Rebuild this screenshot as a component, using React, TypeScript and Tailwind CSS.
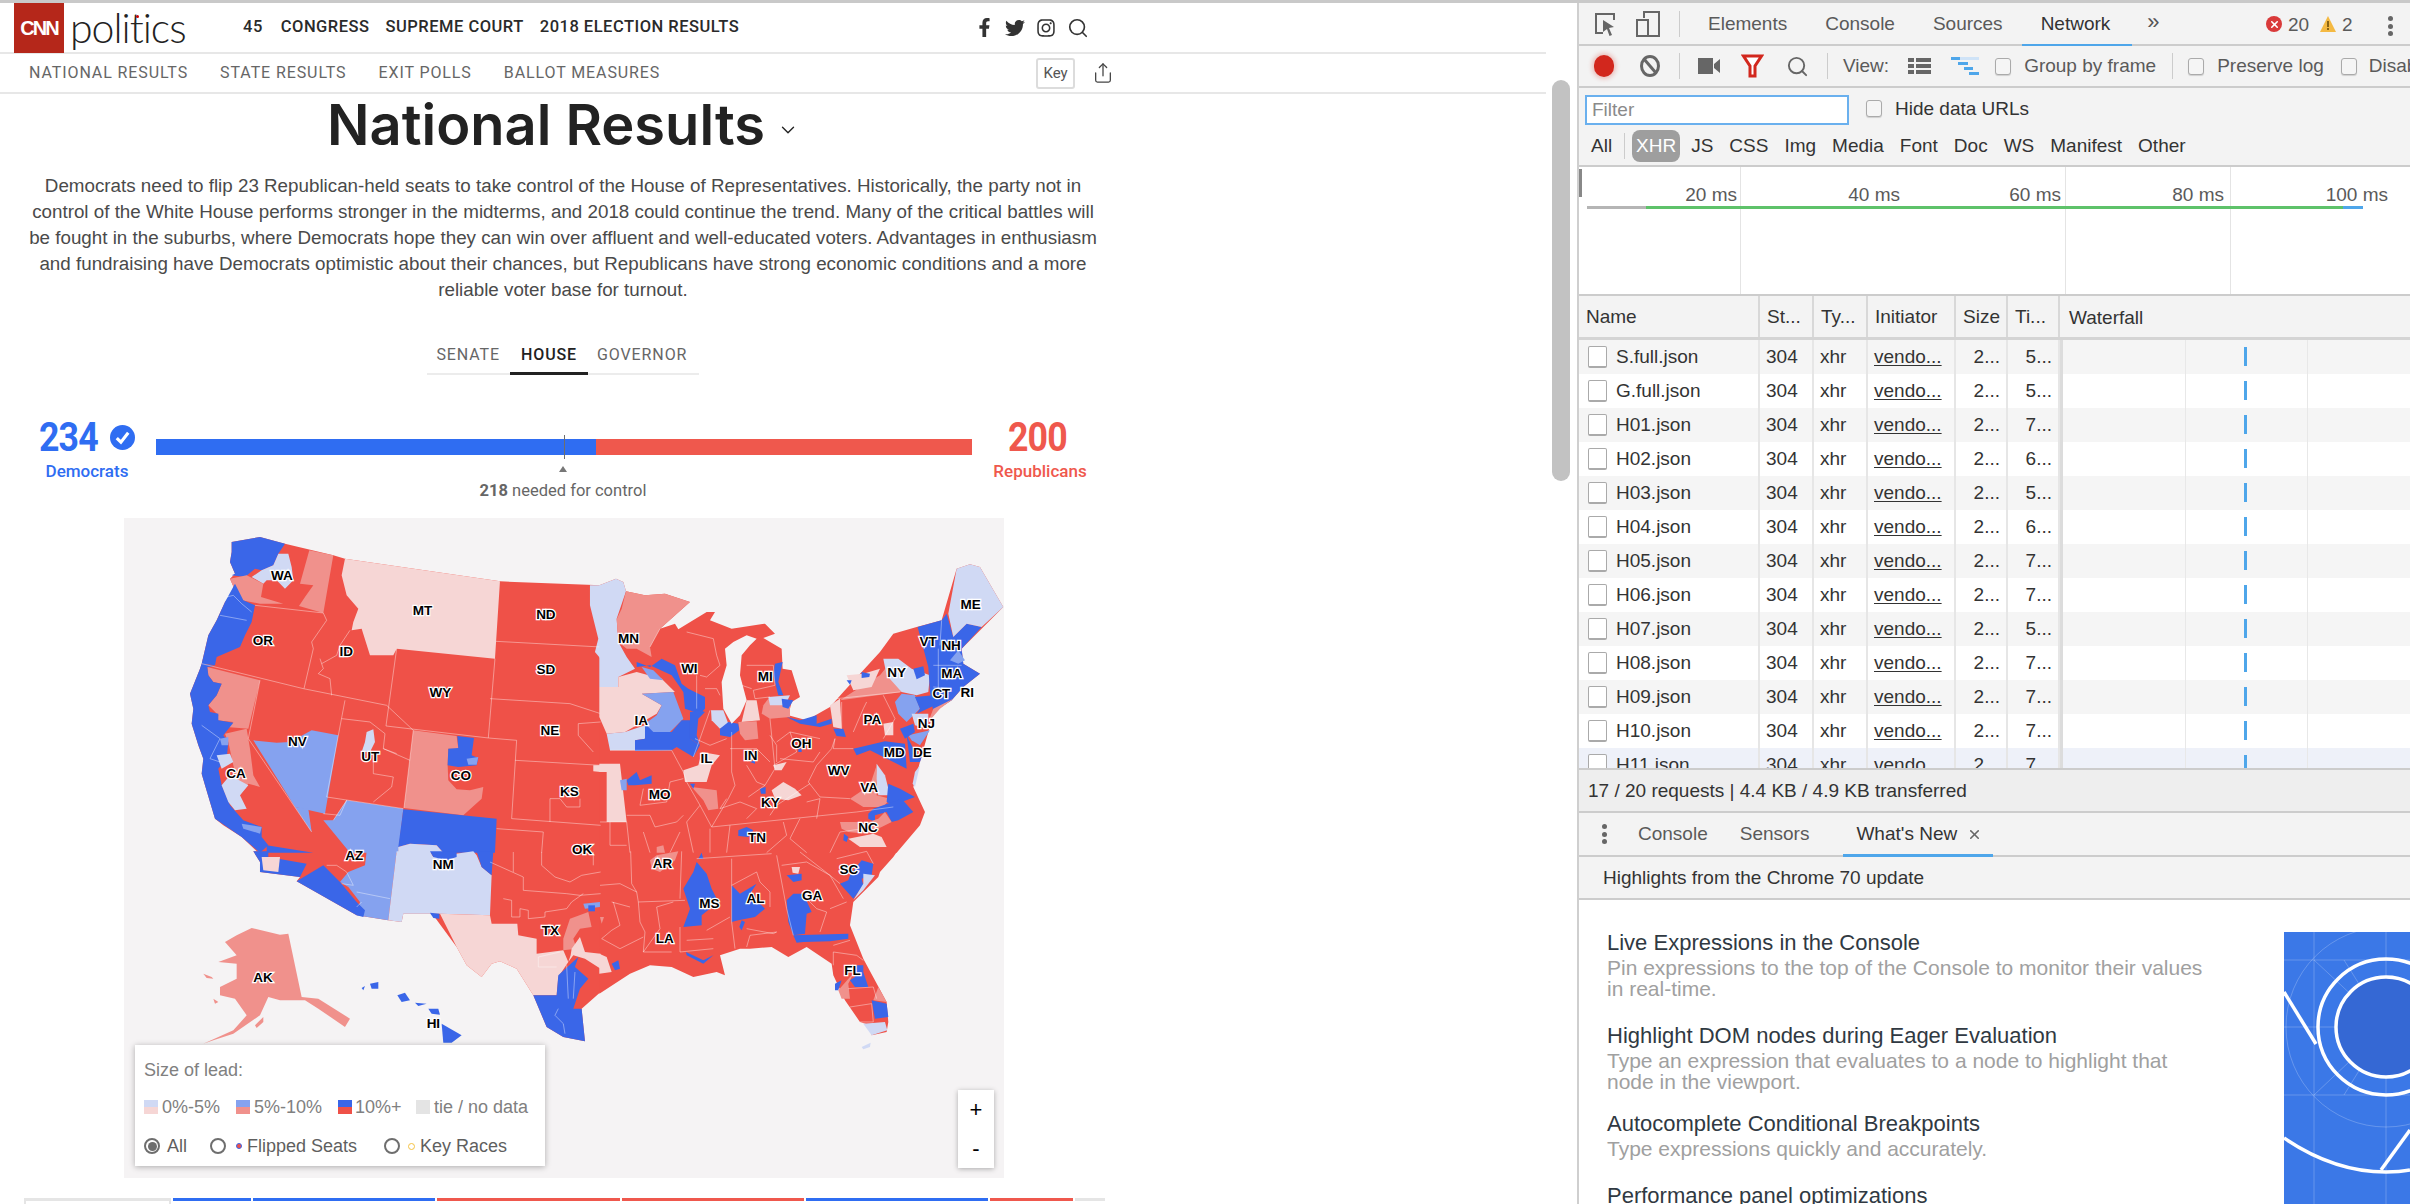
import React from "react";
import { FaFacebookF, FaTwitter, FaInstagram } from "react-icons/fa";
import { Search, ChevronDown, Share, X } from "lucide-react";

const RED = "#ef5148";
const BLUE = "#3a66e8";
const PINK = "#f0918c";
const PALE = "#f6d6d5";
const MID = "#85a2ef";
const LIGHT = "#d0d9f4";
const BG = "#f5f3f4";

type Quad = { ox: number; oy: number; land: string; patches: [string, string][]; lakes?: string[]; lines: string[] };

// the map is split in four parts, each drawn at 3x and scaled down
const quads: Quad[] = [
  {
    ox: 56,
    oy: 14,
    land: "155,30 240,15 315,35 460,70 495,80 960,148 1262,160 1262,962 235,962 185,915 130,880 105,860 75,760 65,725 70,680 55,640 35,575 40,530 30,485 60,410 65,395 85,310 110,265 135,210 165,175 150,140 165,125 150,90 155,60",
    patches: [
      [PALE, "495,80 960,148 945,380 650,350 640,370 570,370 545,290 515,295 520,270 535,230 500,190 485,130"],
      [MID, "220,625 290,632 330,630 395,595 475,610 435,845 345,825"],
      [MID, "345,825 385,830 395,900"],
      [MID, "500,805 670,830 655,962 510,962 430,865 460,865"],
      [PINK, "700,595 830,612 835,650 805,650 803,700 805,745 830,772 870,775 910,765 905,800 850,850 672,828"],
      [BLUE, "832,612 882,618 875,670 895,678 890,700 835,705 803,700 805,650 835,648"],
      [BLUE, "670,832 950,860 945,962 790,962 770,940 690,935 655,945"],
      [BLUE, "155,30 240,15 315,35 295,65 280,100 245,115 225,110 195,135 155,130 165,125 150,90 155,60"],
      [LIGHT, "295,65 325,65 335,105 340,145 315,170 290,145 260,145 250,155 215,135 245,115 280,100"],
      [PINK, "388,55 460,70 430,243 357,222 375,195 400,160 360,155"],
      [PINK, "150,140 200,130 250,155 243,195 310,215 240,215 185,205 165,175"],
      [BLUE, "165,155 190,205 225,220 215,270 195,310 180,345 110,375 105,400 65,395 85,310 110,265 135,210"],
      [PINK, "82,405 240,445 205,590 140,585 160,570 110,565 115,550 85,520 110,490 125,455 100,450 85,430"],
      [BLUE, "65,395 105,402 82,405 85,430 100,450 125,455 110,490 85,520 90,540 115,545 115,565 160,572 130,610 145,630 140,680 115,710 125,760 150,820 190,865 245,885 245,915 265,940 240,962 185,915 105,860 75,760 65,725 70,680 55,640 35,575 40,530 30,485 60,410"],
      [PINK, "135,605 200,590 210,650 220,730 240,765 205,755 180,790 160,700 145,630"],
      [LIGHT, "110,670 150,665 160,690 125,710"],
      [LIGHT, "125,760 150,730 205,760 180,790 200,830 165,835 145,810"],
      [MID, "185,875 245,885 240,905 190,890"],
      [MID, "120,620 145,615 145,640 125,640"],
      [BLUE, "260,940 400,962 260,962"],
      [LIGHT, "560,600 580,592 585,630 570,660 545,660 555,630"],
      [LIGHT, "1230,160 1262,160 1262,380 1245,360 1255,320 1230,220"],
      [PALE, "1240,700 1262,700 1262,720 1240,718"],
      [LIGHT, "655,945 690,935 770,940 790,962 655,962"],
      [MID, "860,680 895,675 890,698 865,698"],
    ],
    lines: [
      "430,243 440,265 395,330 400,350 372,470",
      "225,220 430,243",
      "65,395 370,470 620,520 700,595",
      "240,445 205,620 395,900",
      "495,505 440,795 670,830",
      "650,350 618,582 925,618",
      "672,828 700,595",
      "945,380 925,618 1010,625 995,860 1262,880",
      "948,328 1262,345",
      "930,500 1170,515 1262,545",
      "1005,685 1262,700",
      "485,560 570,570 615,605 610,650 690,685",
      "580,690 580,725 640,735 635,765 580,810",
      "610,650 650,665",
      "420,380 430,410 415,425 450,440 455,490",
      "510,295 480,340 470,370 425,395",
      "1110,800 1140,800 1160,825 1200,825 1200,800",
      "1110,800 1110,870",
      "950,890 1090,900 1085,962",
      "120,250 200,265",
      "140,195 160,190 185,215 215,240",
      "65,580 120,620 90,680 120,690",
      "1195,575 1262,570",
      "1195,575 1195,610 1240,660",
      "460,865 500,805 480,850 430,845",
    ],
  },
  {
    ox: 476,
    oy: 14,
    land: "-2,160 48,140 70,150 78,178 135,190 195,185 270,210 180,290 225,275 235,292 320,240 345,240 330,265 395,290 495,275 525,305 490,318 545,350 548,410 575,415 600,495 575,510 565,550 620,565 690,525 730,480 840,360 880,305 950,285 1025,265 1070,110 1110,97 1140,105 1210,225 1145,290 1085,350 1090,395 1140,425 1090,465 1055,505 1000,540 985,600 960,690 940,765 975,840 960,880 890,962 -2,962",
    patches: [
      [LIGHT, "-2,160 48,140 70,150 78,178 50,260 55,330 80,375 105,410 55,435 55,465 -2,465"],
      [PINK, "78,178 135,190 195,185 270,210 180,290 150,345 155,375 110,350 80,350 55,330 50,262 65,230"],
      [PALE, "-2,465 55,465 55,435 110,420 185,440 225,480 125,485 185,520 170,545 75,600 20,605 -2,555"],
      [MID, "125,485 220,480 250,560 210,600 155,600 135,575 170,550 185,520"],
      [MID, "125,405 160,415 190,445 150,440"],
      [LIGHT, "20,605 75,600 135,580 135,620 105,625 105,655 30,655"],
      [BLUE, "105,625 135,620 135,575 160,600 215,600 245,565 270,565 270,620 300,640 280,675 230,645 215,655 105,657"],
      [BLUE, "110,390 150,405 185,380 225,400 245,455 265,470 315,495 315,530 300,545 255,530 250,480 215,430 150,400 110,405"],
      [BLUE, "270,540 300,535 315,540 295,560 290,610 300,640 270,620"],
      [LIGHT, "333,535 370,535 385,575 360,590 335,565"],
      [BLUE, "360,590 385,570 415,575 418,595 390,615 360,610"],
      [BLUE, "525,395 548,390 535,450 550,490 535,490 520,430"],
      [PALE, "425,570 440,505 470,505 480,565"],
      [PINK, "415,570 470,568 475,620 435,625 420,605"],
      [PINK, "485,545 490,520 505,500 570,520 570,555 510,560"],
      [LIGHT, "505,495 570,490 555,520 510,520"],
      [BLUE, "545,500 580,505 565,530 548,525"],
      [BLUE, "560,555 600,565 650,550 650,575 695,560 695,575 660,585 600,575"],
      [BLUE, "700,590 730,590 738,615 710,612"],
      [PALE, "690,520 720,500 725,590 700,585"],
      [PINK, "720,505 790,460 840,430 860,405 905,480"],
      [PALE, "740,430 790,425 840,410 815,465 760,475"],
      [BLUE, "785,420 810,425 808,435 785,438"],
      [BLUE, "740,445 755,445 750,458"],
      [LIGHT, "850,380 895,380 935,410 990,430 985,480 950,490 905,480 860,430"],
      [BLUE, "940,410 970,403 975,430 950,442"],
      [BLUE, "953,285 1025,265 1040,245 1060,315 1100,275 1145,285 1085,350 1090,395 1140,425 1090,465 1055,505 1000,540 990,480 985,405"],
      [LIGHT, "1045,245 1070,110 1110,97 1140,105 1210,225 1145,285 1100,275 1060,315"],
      [MID, "1050,385 1075,355 1095,385 1075,395"],
      [MID, "885,510 905,485 945,490 960,530 920,570 895,545"],
      [BLUE, "945,495 1000,490 1005,520 950,545 960,530"],
      [PINK, "1000,530 1060,500 1020,530 985,570"],
      [LIGHT, "935,545 985,545 985,590 945,580"],
      [MID, "925,610 990,595 960,640 935,625"],
      [BLUE, "900,590 940,575 945,600 915,620"],
      [PALE, "850,575 880,570 880,610 855,610"],
      [BLUE, "760,650 855,628 915,635 920,710 880,690 840,670 810,655 770,670"],
      [BLUE, "920,610 940,650 938,680 965,675 960,690 930,690"],
      [LIGHT, "945,720 960,700 945,765 938,755"],
      [LIGHT, "830,695 855,730 870,790 835,790 828,740"],
      [PINK, "750,800 810,760 830,700 830,790 870,800 850,825 790,825"],
      [BLUE, "865,755 900,770 945,795 905,810 900,830 860,810"],
      [BLUE, "820,830 905,800 940,840 895,865 875,870 860,840 825,850 825,870 805,860 805,845"],
      [PINK, "720,870 775,870 805,870 835,860 855,840 875,870 845,885 800,905 745,900 725,890"],
      [PALE, "745,920 820,905 845,915 860,945 780,945"],
      [BLUE, "732,905 745,915 740,930 730,925"],
      [PALE, "520,700 560,690 545,715 525,715"],
      [PALE, "515,775 550,750 585,770 605,790 565,805 525,800"],
      [BLUE, "480,770 497,765 497,785 483,785"],
      [PALE, "305,660 360,670 335,700 320,750 255,750 250,715 295,700"],
      [PINK, "275,765 350,775 355,830 325,835 310,805"],
      [PALE, "-2,695 60,695 80,870 20,870 20,720 -2,720"],
      [BLUE, "80,745 110,720 120,745 155,730 155,755 105,760 85,760"],
      [MID, "60,745 80,740 80,775 65,775"],
      [BLUE, "415,895 440,885 460,895 445,915 415,912"],
      [BLUE, "270,755 285,755 280,770"],
      [BLUE, "595,650 605,650 605,660 595,660"],
      [BLUE, "450,690 465,685 465,695"],
      [PINK, "170,945 190,940 195,962 170,962"],
    ],
    lakes: ["375,350 400,330 440,310 470,320 450,340 425,370 420,430 440,505 420,550 395,575 370,530 365,450 380,400"],
    lines: [
      "0,870 80,870 90,962",
      "30,655 215,655 250,720 260,750 300,820 335,885",
      "335,885 770,840 880,825",
      "395,600 395,720 405,760 385,800 335,885",
      "510,560 525,710 495,760 445,795",
      "705,620 700,650 760,650",
      "725,510 725,590",
      "710,500 900,480",
      "750,800 660,795 625,750 650,700 695,650 705,620",
      "630,755 530,820 510,850",
      "150,345 180,290",
      "260,300 340,320 350,370 360,400 320,435 300,430",
      "290,430 290,530",
      "315,470 350,470 360,490",
      "330,535 300,620 280,675",
      "285,620 330,640 380,620",
      "440,400 520,400 525,460 460,475 465,500 510,495",
      "425,460 455,470",
      "530,630 570,600 660,620",
      "570,600 590,660 520,700",
      "540,680 640,690 660,660",
      "510,610 530,640 530,690",
      "390,650 470,650 510,690",
      "440,700 470,750 495,760",
      "800,510 790,530 760,600",
      "850,490 885,560 850,620",
      "1015,350 1015,470",
      "1000,400 1085,400",
      "1000,465 1055,470",
      "1025,265 1020,340",
      "130,770 120,820 200,810 210,750 250,740",
      "80,850 150,850 165,885 230,870 250,850",
      "300,820 260,870 280,962",
      "380,800 360,830 420,810 470,830 440,860",
      "620,810 660,800 650,860",
      "550,870 560,910 500,962",
      "600,860 570,920 620,962",
      "790,890 720,900 690,962",
      "30,870 30,940 80,940",
      "330,890 330,962",
      "390,880 380,962",
      "240,900 210,962",
      "130,900 150,962",
    ],
  },
  {
    ox: 56,
    oy: 334,
    land: "220,-2 240,30 240,60 360,75 350,88 530,190 625,205 665,210 670,185 750,185 760,190 830,285 860,340 905,375 935,335 960,328 1010,350 1060,430 1100,525 1150,555 1215,568 1210,520 1205,470 1262,420 1262,-2",
    patches: [
      [BLUE, "220,-2 265,-2 265,15 380,35 360,75 240,60 240,30"],
      [PALE, "245,15 300,15 295,60 250,55"],
      [MID, "490,-2 650,-2 625,205 530,190 540,150 505,105 480,90 505,60 555,40 560,-2"],
      [BLUE, "350,88 430,40 480,90 505,120 530,150 555,175 550,195 530,190"],
      [LIGHT, "650,-2 750,-2 760,15 880,-2 890,10 905,45 935,70 930,190 780,185 750,185 670,185 665,210 625,205"],
      [BLUE, "750,-2 830,-2 830,15 800,25 760,15"],
      [BLUE, "890,-2 940,-2 935,70 905,45"],
      [BLUE, "750,182 778,185 778,200 760,198"],
      [PALE, "780,185 930,190 935,215 1012,215 1015,250 1070,260 1070,305 1150,295 1165,330 1135,375 1130,430 1060,430 1010,350 960,328 935,335 905,375 860,340 830,285"],
      [PINK, "1150,260 1170,200 1225,180 1235,225 1200,230 1180,260 1190,290 1150,295"],
      [PALE, "1175,290 1200,255 1215,300 1262,305 1262,350 1215,320 1180,310 1165,330 1172,310"],
      [BLUE, "1060,430 1130,430 1135,370 1195,315 1185,345 1225,380 1200,410 1180,470 1205,470 1215,568 1150,555 1100,525"],
      [MID, "1210,155 1260,150 1260,165 1215,170"],
      [BLUE, "1225,160 1245,160 1245,178 1225,178"],
      [PINK, "135,270 170,250 215,228 300,248 325,245 365,435 415,440 510,500 495,525 415,470 375,445 300,445 265,435 240,490 160,545 100,565 70,575 160,535 200,490 165,440 120,430 120,405 170,380 170,335 115,330 170,310"],
      [PINK, "225,520 250,495 250,510 230,528"],
      [PINK, "70,365 95,375 100,380 80,378"],
      [PINK, "100,440 115,450 105,455"],
      [BLUE, "785,515 845,550 815,572 790,572"],
      [BLUE, "652,430 675,422 690,445 665,450"],
      [BLUE, "705,452 740,455 715,462"],
      [BLUE, "745,470 775,470 780,488 755,485"],
      [BLUE, "570,395 595,390 595,410 575,410"],
      [BLUE, "545,408 555,402 550,415"],
    ],
    lines: [
      "930,30 1030,75 1030,115 1160,125 1200,130 1262,125",
      "1085,0 1085,40 1125,75 1170,90 1205,70 1262,60",
      "970,140 995,145 995,195 1020,195 1020,170 1045,175 1045,200 1095,195 1095,180 1160,170 1175,150 1210,125",
      "1075,315 1140,300",
      "1075,315 1075,345 1130,345",
      "1135,470 1125,490 1150,515 1155,545",
      "1160,340 1165,440",
      "1185,360 1180,440",
      "530,120 630,140",
      "545,150 530,165",
      "485,95 520,100 500,60 470,40 440,40",
      "1000,0 1000,60",
      "1240,0 1240,40",
    ],
  },
  {
    ox: 476,
    oy: 334,
    land: "-2,-2 892,-2 880,15 840,60 835,75 760,150 750,220 790,320 860,450 865,510 860,540 815,550 810,520 780,510 735,445 700,370 695,335 620,285 565,315 515,285 450,290 420,290 360,310 375,370 350,360 280,375 215,345 150,340 90,365 -2,425",
    patches: [
      [BLUE, "290,30 320,65 335,110 355,150 305,190 305,220 250,225 270,170 250,110 280,60"],
      [BLUE, "295,20 310,20 305,2"],
      [BLUE, "395,100 420,125 470,95 450,125 495,170 465,195 415,205 395,210"],
      [BLUE, "425,205 435,210 425,235 418,225"],
      [BLUE, "560,145 580,125 610,125 635,180 620,185 615,245 580,250 565,210"],
      [BLUE, "580,250 745,245 745,260 690,268 610,270 590,272"],
      [BLUE, "560,70 605,65 605,85 580,90"],
      [PALE, "575,45 600,45 595,65 578,62"],
      [BLUE, "785,25 820,35 815,70 785,80 790,100 760,140 720,95 745,85 750,70"],
      [LIGHT, "790,65 825,70 790,115 760,145 790,95"],
      [BLUE, "770,340 790,340 790,360 805,405 765,405 750,385 765,375"],
      [BLUE, "705,395 725,385 715,415 705,415"],
      [PINK, "750,375 760,365 745,395 750,440 725,440 715,415"],
      [PINK, "835,405 860,450 820,445"],
      [BLUE, "815,445 860,455 865,495 825,500"],
      [LIGHT, "790,515 855,510 862,535 815,550"],
      [LIGHT, "785,585 812,572 810,585 790,592"],
      [BLUE, "258,300 310,325 340,310 310,335 260,310"],
      [PINK, "0,195 12,195 5,215"],
      [PALE, "-2,305 20,315 35,360 -2,365"],
      [BLUE, "35,335 55,325 60,350 45,355"],
      [PINK, "150,25 170,10 235,-2 225,25 180,60 155,50"],
    ],
    lines: [
      "92,-2 95,95 110,120 115,150 255,145",
      "115,150 120,210 135,240 130,300 215,300",
      "395,20 395,210 405,290",
      "240,140 245,-2",
      "515,5 290,20",
      "530,10 560,170 580,250",
      "600,0 690,70 730,140",
      "610,130 650,170 680,180 660,240",
      "740,150 690,170",
      "440,230 520,245 530,240 450,250 440,285",
      "320,235 390,195",
      "240,225 240,300 340,290",
      "260,265 340,260",
      "0,100 60,95 110,120",
      "40,150 60,220 35,235 5,260 60,290 130,255",
      "170,165 220,150",
      "170,165 180,230 130,300",
      "35,150 90,165",
      "700,340 700,300 770,310 790,325",
      "700,280 750,265",
      "745,410 820,405 830,440",
      "750,465 815,455 820,510 780,510",
      "395,100 470,60 480,90",
      "480,90 510,120 510,165",
      "545,40 620,30 690,70",
      "820,35 800,-2 710,20",
      "720,95 690,70",
    ],
  },
];

// label centres in the coordinates of the full map crop
const labels: [string, number, number][] = [
  ["WA", 282, 142], ["OR", 249, 289], ["CA", 202, 591], ["NV", 309, 519], ["ID", 394, 314], ["MT", 527, 222],
  ["WY", 558, 408], ["UT", 436, 552], ["CO", 594, 594], ["AZ", 408, 775], ["NM", 563, 796], ["ND", 742, 230],
  ["SD", 742, 356], ["NE", 749, 494], ["KS", 783, 632], ["OK", 805, 763], ["TX", 750, 945], ["MN", 886, 285],
  ["IA", 908, 471], ["MO", 940, 637], ["AR", 945, 793], ["LA", 949, 963], ["WI", 992, 353], ["IL", 1022, 556],
  ["MS", 1027, 883], ["MI", 1124, 370], ["IN", 1099, 549], ["KY", 1133, 655], ["TN", 1110, 734], ["AL", 1107, 873],
  ["OH", 1187, 522], ["GA", 1206, 865], ["FL", 1276, 1036], ["SC", 1270, 807], ["NC", 1303, 713], ["VA", 1305, 623],
  ["WV", 1252, 584], ["PA", 1311, 468], ["NY", 1353, 363], ["VT", 1408, 293], ["NH", 1448, 301], ["ME", 1482, 209],
  ["MA", 1449, 365], ["CT", 1431, 410], ["RI", 1476, 408], ["NJ", 1405, 478], ["MD", 1349, 542], ["DE", 1398, 542],
  ["AK", 249, 1051], ["HI", 546, 1155],
];

const UsMap = () => (
  <svg viewBox="0 0 880 660" className="w-[880px] h-[660px] block">
    {quads.map((q, i) => (
      <g key={i} transform={`translate(${q.ox} ${q.oy}) scale(0.3333)`}>
        <polygon points={q.land} fill={RED} />
      </g>
    ))}
    {quads.map((q, i) => (
      <g key={i} transform={`translate(${q.ox} ${q.oy}) scale(0.3333)`}>
        {q.patches.map(([c, p], j) => (
          <polygon key={j} points={p} fill={c} />
        ))}
        {q.lakes?.map((p, j) => (
          <polygon key={j} points={p} fill={BG} />
        ))}
        {q.lines.map((p, j) => (
          <polyline key={j} points={p} fill="none" stroke="#fff" strokeOpacity="0.6" strokeWidth="2" />
        ))}
      </g>
    ))}
    {labels.map(([t, x, y]) => (
      <text
        key={t}
        x={(x - 7) * 0.574}
        y={(y - 14) * 0.4425 + 5}
        textAnchor="middle"
        fontSize="13.5"
        fontWeight="700"
        fontFamily="'Liberation Sans', sans-serif"
        fill="#000"
        stroke="#fff"
        strokeWidth="2.5"
        paintOrder="stroke"
      >
        {t}
      </text>
    ))}
  </svg>
);

const Swatch = ({ top, bottom }: { top: string; bottom: string }) => (
  <span className="flex flex-col w-[14px] h-[14px]">
    <span className="h-[7px]" style={{ background: top }} />
    <span className="h-[7px]" style={{ background: bottom }} />
  </span>
);

const Radio = ({ on }: { on?: boolean }) => (
  <span className="w-[16px] h-[16px] rounded-full border-2 border-[#6e6e6e] flex items-center justify-center bg-white">
    {on && <span className="w-[9px] h-[9px] rounded-full bg-[#6e6e6e]" />}
  </span>
);

const Legend = () => (
  <div className="absolute left-[11px] top-[527px] w-[410px] h-[121px] bg-white shadow-[0_1px_6px_rgba(0,0,0,0.3)] pl-[9px] text-[#808080] text-[18px] font-['Liberation_Sans',sans-serif]">
    <div className="h-[55px] pt-[15px] leading-[20px]">Size of lead:</div>
    <div className="flex items-center h-[14px]">
      <Swatch top={LIGHT} bottom={PALE} />
      <span className="w-[78px] pl-[4px]">0%-5%</span>
      <Swatch top={MID} bottom={PINK} />
      <span className="w-[88px] pl-[4px]">5%-10%</span>
      <Swatch top={BLUE} bottom={RED} />
      <span className="w-[64px] pl-[3px]">10%+</span>
      <span className="w-[14px] h-[14px] bg-[#e4e4e4]" />
      <span className="pl-[4px] whitespace-nowrap">tie / no data</span>
    </div>
    <div className="flex items-center mt-[22px] h-[20px] text-[#5f5f5f]">
      <Radio on />
      <span className="pl-[7px] w-[50px]">All</span>
      <Radio />
      <span className="ml-[10px] w-[6px] h-[6px] rounded-full bg-[#ef5148] border border-[#3a66e8]" />
      <span className="pl-[5px] w-[142px] whitespace-nowrap">Flipped Seats</span>
      <Radio />
      <span className="ml-[8px] w-[7px] h-[7px] rounded-full border border-[#f5c242]" />
      <span className="pl-[5px] whitespace-nowrap">Key Races</span>
    </div>
  </div>
);

const Page = () => (
  <div className="w-[1546px] flex flex-col font-['Liberation_Sans',sans-serif]">
    <header className="h-[49px] flex items-center border-b-2 border-[#e7e7e7] box-content">
      <div className="w-[975px] flex items-center shrink-0">
        <div className="ml-[14px] w-[50px] h-[50px] -mb-[1px] bg-[#b5271a] flex items-center justify-center text-white font-bold text-[20px] tracking-[-2px]">
          CNN
        </div>
        <div className="relative ml-[6px] w-[115px] font-['Lato',sans-serif] font-light text-[41px] leading-none text-[#222] tracking-[-1px]">
          politics
          <span className="absolute left-[66px] top-[8px] w-[3px] h-[3px] rounded-full bg-[#cc0000]" />
        </div>
        <nav className="ml-[58px] flex gap-[16px] text-[#2a2a2a] text-[16.5px] font-['Roboto',sans-serif] font-medium tracking-[0.5px] whitespace-nowrap">
          <span className="mr-[2px]">45</span>
          <span>CONGRESS</span>
          <span>SUPREME COURT</span>
          <span>2018 ELECTION RESULTS</span>
        </nav>
      </div>
      <div className="flex items-center gap-[11px] text-[#333]">
        <FaFacebookF size={19} />
        <FaTwitter size={20} />
        <FaInstagram size={20} />
        <Search size={22} strokeWidth={1.8} />
      </div>
    </header>
    <div className="h-[38px] flex items-center border-b-2 border-[#e7e7e7] box-content">
      <div className="w-[1036px] shrink-0">
        <nav className="ml-[29px] flex gap-[32px] text-[#666] text-[16px] font-['Roboto',sans-serif] tracking-[0.9px]">
          <span>NATIONAL RESULTS</span>
          <span>STATE RESULTS</span>
          <span>EXIT POLLS</span>
          <span>BALLOT MEASURES</span>
        </nav>
      </div>
      <span className="w-[39px] h-[31px] border-2 border-[#dcdcdc] rounded-[3px] flex items-center justify-center text-[15px] text-[#555] font-['Roboto',sans-serif]">
        Key
      </span>
      <Share size={22} strokeWidth={1.4} className="ml-[17px] text-[#444]" />
    </div>

    <div className="w-[1126px] flex flex-col items-center">
      <h1 className="flex items-center h-[62px] text-[#222] text-[56px] font-['Inter',sans-serif] font-semibold leading-none">
        National Results
        <ChevronDown size={22} strokeWidth={1.5} className="ml-[12px] mt-[10px]" />
      </h1>
      <p className="mt-[17px] text-center text-[#4a4a4a] text-[18.8px] leading-[26px] whitespace-nowrap">
        Democrats need to flip 23 Republican-held seats to take control of the House of Representatives. Historically, the party not in
        <br />
        control of the White House performs stronger in the midterms, and 2018 could continue the trend. Many of the critical battles will
        <br />
        be fought in the suburbs, where Democrats hope they can win over affluent and well-educated voters. Advantages in enthusiasm
        <br />
        and fundraising have Democrats optimistic about their chances, but Republicans have strong economic conditions and a more
        <br />
        reliable voter base for turnout.
      </p>
      <div className="mt-[28px] flex w-[272px] justify-center border-b-2 border-[#ececec] h-[44px] font-['Roboto',sans-serif] text-[16px] tracking-[0.9px]">
        <span className="w-[83px] text-right pr-[10px] pt-[12px] text-[#666]">SENATE</span>
        <span className="w-[78px] text-center pt-[12px] text-[#222] font-medium border-b-[3px] border-[#222] h-[44px]">HOUSE</span>
        <span className="w-[111px] pl-[9px] pt-[12px] text-[#666]">GOVERNOR</span>
      </div>

      <div className="mt-[48px] w-full h-[82px] flex">
        <div className="w-[156px] flex flex-col -mt-[4px]">
          <div className="flex items-center pl-[39px] text-[#2f6df2] font-['Roboto',sans-serif] font-bold text-[41px] leading-[36px] tracking-[-1px]">
            <span className="block w-[61px] origin-left scale-x-[0.87]">234</span>
            <svg viewBox="0 0 24 24" className="ml-[10px] w-[25px] h-[25px] shrink-0">
              <circle cx="12" cy="12" r="12" fill="#2f6df2" />
              <path d="M6.5 12.5l4 4 7-9" fill="none" stroke="#fff" strokeWidth="3" />
            </svg>
          </div>
          <div className="mt-[4px] pl-[18px] text-center text-[#2f6df2] text-[17px] font-['Roboto',sans-serif] font-medium">Democrats</div>
        </div>
        <div className="w-[816px] flex flex-col items-center">
          <div className="relative mt-[16px] w-full h-[16px] flex">
            <div className="w-[440px] bg-[#2f6df2]" />
            <div className="flex-1 bg-[#ef584d]" />
            <div className="absolute left-[408px] -top-[4px] w-px h-[24px] bg-[#6e6e6e]" />
          </div>
          <div className="mt-[11px] w-0 h-0 border-x-[4px] border-x-transparent border-b-[6px] border-b-[#777] -ml-[3px]" />
          <div className="mt-[10px] -ml-[2px] text-[#666] text-[16.5px] leading-[18px] font-['Roboto',sans-serif]">
            <b className="font-bold">218</b> needed for control
          </div>
        </div>
        <div className="w-[154px] flex flex-col -mt-[4px]">
          <div className="pl-[36px] text-[#ef584d] font-['Roboto',sans-serif] font-bold text-[41px] leading-[36px] tracking-[-1px]">
            <span className="block w-[62px] origin-left scale-x-[0.87]">200</span>
          </div>
          <div className="mt-[4px] pr-[18px] text-center text-[#ef584d] text-[17px] font-['Roboto',sans-serif] font-medium">Republicans</div>
        </div>
      </div>
    </div>

    <div className="relative ml-[124px] mt-[13px] w-[880px] h-[660px] bg-[#f5f3f4]">
      <UsMap />
      <Legend />
      <div className="absolute left-[834px] top-[572px] w-[36px] h-[78px] bg-white shadow-[0_1px_5px_rgba(0,0,0,0.3)] flex flex-col items-center text-black text-[22px] leading-[39px]">
        <span>+</span>
        <span>-</span>
      </div>
    </div>

    <div className="ml-[24px] mt-[20px] w-[1522px] h-[8px] flex gap-[2px] items-start">
      <div className="w-[147px] h-[8px] border-t-[3px] border-x-2 border-[#e5e5e5]" />
      <div className="w-[78px] h-[8px] border-t-[3px] border-[#2f6df2]" />
      <div className="w-[182px] h-[8px] border-t-[3px] border-[#2f6df2]" />
      <div className="w-[183px] h-[8px] border-t-[3px] border-[#ef584d]" />
      <div className="w-[182px] h-[8px] border-t-[3px] border-[#ef584d]" />
      <div className="w-[182px] h-[8px] border-t-[3px] border-[#2f6df2]" />
      <div className="w-[83px] h-[8px] border-t-[3px] border-[#ef584d]" />
      <div className="w-[30px] h-[8px] border-t-[3px] border-[#e5e5e5]" />
    </div>
  </div>
);

const Sep = () => <span className="block w-px h-[26px] bg-[#ccc]" />;

const Check = () => <span className="block w-[16px] h-[17px] rounded-[3px] border border-[#aaa] bg-[#f5f5f5] shadow-[0_1px_1px_rgba(0,0,0,0.15)]" />;

const rows = [
  ["S.full.json", "5"], ["G.full.json", "5"], ["H01.json", "7"], ["H02.json", "6"], ["H03.json", "5"], ["H04.json", "6"], ["H05.json", "7"],
  ["H06.json", "7"], ["H07.json", "5"], ["H08.json", "7"], ["H09.json", "7"], ["H10.json", "7"], ["H11.json", "7"],
];

const tableCols = "grid grid-cols-[181px_54px_54px_88px_52px_52px_3px_1fr]";

const NetworkTable = () => (
  <div className="h-[472px] shrink-0 flex flex-col overflow-hidden">
    <div className={`${tableCols} h-[41px] shrink-0 border-b-[3px] border-[#d4d4d4] bg-[#f3f3f3] text-[#333] items-center box-content`}>
      {["Name", "St...", "Ty...", "Initiator", "Size", "Ti..."].map((h) => (
        <span key={h} className="h-full flex items-center pl-[7px] border-r-2 border-[#d8d8d8]">{h}</span>
      ))}
      <span />
      <span className="pl-[6px] pt-[2px]">Waterfall</span>
    </div>
    {rows.map(([name, t], i) => (
      <div
        key={name}
        className={`${tableCols} h-[34px] shrink-0 text-[#333] items-center ${i === 12 ? "bg-[#eef1f9]" : i % 2 === 0 ? "bg-[#f5f5f5]" : "bg-white"}`}
      >
        <span className="h-full flex items-center pl-[9px] gap-[9px] border-r-2 border-[#e6e6e6]">
          <span className="w-[19px] h-[22px] bg-white border border-[#aaa] border-b-2 rounded-[2px]" />
          {name}
        </span>
        <span className="h-full flex items-center pl-[6px] border-r-2 border-[#e6e6e6]">304</span>
        <span className="h-full flex items-center pl-[6px] border-r-2 border-[#e6e6e6]">xhr</span>
        <span className="h-full flex items-center pl-[6px] border-r-2 border-[#e6e6e6] underline underline-offset-2">vendo...</span>
        <span className="h-full flex items-center justify-end pr-[6px] border-r-2 border-[#e6e6e6]">2...</span>
        <span className="h-full flex items-center justify-end pr-[6px] border-r-2 border-[#e6e6e6]">{t}...</span>
        <span className="h-full bg-[#dcdcdc]" />
        <span className="relative h-full">
          <span className="absolute left-[122px] top-0 w-px h-full bg-[#e8e8e8]" />
          <span className="absolute left-[244px] top-0 w-px h-full bg-[#e8e8e8]" />
          <span className="absolute left-[181px] top-[7px] w-[3px] h-[19px] bg-[#4ea6ea]" />
        </span>
      </div>
    ))}
  </div>
);

const Article = ({ title, children, className }: { title: string; children?: React.ReactNode; className: string }) => (
  <div className={className}>
    <div className="text-[22px] leading-[26px] text-[#303942]">{title}</div>
    {children && <div className="mt-[2px] text-[21px] leading-[20.5px] text-[#a0a0a0]">{children}</div>}
  </div>
);

const WhatsNewArt = () => (
  <svg viewBox="0 0 126 272" className="w-[126px] h-[272px] block shrink-0">
    <rect width="126" height="272" fill="#3b78e7" />
    <g stroke="#fff" strokeOpacity="0.22" strokeWidth="1" fill="none">
      <circle cx="102" cy="95" r="100" />
      <path d="M0 28H126M0 95H126M0 163H126M30 0V272M102 0V272M30 28L102 95L30 163M102 95L60 163M102 95L60 28" />
    </g>
    <circle cx="102" cy="95" r="50" fill="#3568d4" />
    <g stroke="#fff" strokeWidth="3.5" fill="none">
      <circle cx="102" cy="95" r="68" />
      <circle cx="102" cy="95" r="50" />
      <path d="M0 60L32 112" />
      <path d="M0 206Q50 240 102 240Q116 240 126 238" />
      <path d="M97 238L126 198" />
    </g>
  </svg>
);

const Dots = () => (
  <>
    <span className="w-[5px] h-[5px] rounded-full bg-[#666]" />
    <span className="w-[5px] h-[5px] rounded-full bg-[#666]" />
    <span className="w-[5px] h-[5px] rounded-full bg-[#666]" />
  </>
);

const DevTools = () => (
  <div className="w-[833px] h-[1201px] border-l-2 border-[#cfcfcf] flex flex-col overflow-hidden text-[19px] leading-[22px] text-[#5a5a5a] font-['Liberation_Sans',sans-serif] whitespace-nowrap">
    <div className="h-[41px] shrink-0 box-content bg-[#f3f3f3] border-b-2 border-[#ccc] flex items-center relative">
      <svg viewBox="0 0 22 24" className="ml-[15px] w-[22px] h-[24px]" fill="none" stroke="#666" strokeWidth="2">
        <path d="M9 21H2V2H20V8" />
        <path d="M9 8L20 15L15 16L18 23L15.5 24L13 17L9 20Z" fill="#666" stroke="none" />
      </svg>
      <svg viewBox="0 0 24 26" className="ml-[20px] w-[24px] h-[26px]" fill="none" stroke="#666" strokeWidth="2">
        <path d="M8 7V1H23V25H8" />
        <rect x="1" y="9" width="11" height="16" />
      </svg>
      <span className="ml-[19px]"><Sep /></span>
      <div className="flex ml-[28px] gap-[38px]">
        <span>Elements</span>
        <span>Console</span>
        <span>Sources</span>
        <span className="text-[#333]">Network</span>
      </div>
      <span className="absolute left-[443px] -bottom-[2px] w-[110px] h-[2px] bg-[#4ea6ea]" />
      <span className="ml-[37px] text-[#555] text-[22px] -mt-[3px]">»</span>
      <span className="absolute left-[687px] top-[13px] w-[16px] h-[16px] rounded-full bg-[#d93a3a] flex items-center justify-center">
        <X size={11} strokeWidth={3.5} className="text-white" />
      </span>
      <span className="absolute left-[709px] top-[11px]">20</span>
      <svg viewBox="0 0 16 16" className="absolute left-[741px] top-[13px] w-[16px] h-[16px]">
        <path d="M8 0L16 16H0Z" fill="#f4b942" />
        <path d="M7 5H9V11H7ZM7 12H9V14H7Z" fill="#8a6414" />
      </svg>
      <span className="absolute left-[763px] top-[11px]">2</span>
      <span className="absolute left-[809px] top-[13px] w-[5px] h-[20px] flex flex-col justify-between">
        <Dots />
      </span>
    </div>
    <div className="h-[40px] shrink-0 box-content bg-[#f3f3f3] border-b-2 border-[#ccc] flex items-center [&>*]:shrink-0">
      <span className="ml-[15px] w-[20px] h-[22px] rounded-full bg-[#d2271d] shadow-[0_0_4px_2px_rgba(210,39,29,0.25)]" />
      <svg viewBox="0 0 20 22" className="ml-[26px] w-[20px] h-[22px]" fill="none" stroke="#666" strokeWidth="3">
        <ellipse cx="10" cy="11" rx="8.5" ry="9.5" />
        <path d="M4 4L16 18" />
      </svg>
      <span className="ml-[19px]"><Sep /></span>
      <svg viewBox="0 0 22 16" className="ml-[18px] w-[22px] h-[16px]" fill="#666">
        <path d="M0 0H15V16H0ZM16 6L22 1V15L16 10Z" />
      </svg>
      <svg viewBox="0 0 22 24" className="ml-[21px] w-[23px] h-[24px]" fill="#fff" stroke="#d2271d" strokeWidth="3">
        <path d="M2 2H20L13.5 12V22H8.5V12Z" />
      </svg>
      <Search size={23} strokeWidth={2} className="ml-[22px] text-[#666]" />
      <span className="ml-[18px]"><Sep /></span>
      <span className="ml-[15px]">View:</span>
      <svg viewBox="0 0 23 16" className="ml-[19px] w-[23px] h-[16px]" fill="#666">
        <path d="M0 0H6V4H0ZM8 0H23V4H8ZM0 6H6V10H0ZM8 6H23V10H8ZM0 12H6V16H0ZM8 12H23V16H8Z" />
      </svg>
      <svg viewBox="0 0 28 18" className="ml-[20px] w-[28px] h-[18px]">
        <path d="M0 0H28V3H0Z" fill="#cfe3f7" />
        <path d="M0 0H9V3H0ZM7 5H17V8H7ZM13 10H22V13H13ZM18 15H28V18H18Z" fill="#4ea6ea" />
      </svg>
      <span className="ml-[16px]"><Check /></span>
      <span className="ml-[13px]">Group by frame</span>
      <span className="ml-[16px]"><Sep /></span>
      <span className="ml-[15px]"><Check /></span>
      <span className="ml-[13px]">Preserve log</span>
      <span className="ml-[17px]"><Check /></span>
      <span className="ml-[12px]">Disable cache</span>
    </div>
    <div className="h-[77px] shrink-0 box-content bg-[#f3f3f3] border-b-2 border-[#ccc] flex flex-col">
      <div className="h-[42px] flex items-center">
        <div className="ml-[6px] w-[264px] h-[30px] mt-[1px] bg-white border-2 border-[#6ab0ee] text-[#8a8a8a] pl-[5px] leading-[26px]">Filter</div>
        <span className="ml-[17px] -mt-[1px]"><Check /></span>
        <span className="ml-[13px] -mt-[1px] text-[#333]">Hide data URLs</span>
      </div>
      <div className="flex items-center h-[32px] text-[#333] ml-[12px]">
        <span>All</span>
        <span className="ml-[12px]"><Sep /></span>
        <span className="ml-[7px] w-[48px] h-[32px] rounded-[8px] bg-[#9e9e9e] text-white flex items-center justify-center">XHR</span>
        <div className="ml-[11px] flex gap-[16px]">
          <span>JS</span>
          <span>CSS</span>
          <span>Img</span>
          <span>Media</span>
          <span>Font</span>
          <span>Doc</span>
          <span>WS</span>
          <span>Manifest</span>
          <span>Other</span>
        </div>
      </div>
    </div>
    <div className="relative h-[127px] shrink-0 box-content bg-white border-b-2 border-[#ccc]">
      <span className="absolute left-0 top-[2px] w-[3px] h-[28px] bg-[#888]" />
      <span className="absolute left-[161px] top-0 w-px h-full bg-[#e4e4e4]" />
      <span className="absolute left-[486px] top-0 w-px h-full bg-[#e4e4e4]" />
      <span className="absolute left-[651px] top-0 w-px h-full bg-[#e4e4e4]" />
      <span className="absolute right-[673px] top-[17px]">20 ms</span>
      <span className="absolute right-[510px] top-[17px]">40 ms</span>
      <span className="absolute right-[349px] top-[17px]">60 ms</span>
      <span className="absolute right-[186px] top-[17px]">80 ms</span>
      <span className="absolute right-[22px] top-[17px]">100 ms</span>
      <span className="absolute left-[8px] top-[39px] w-[59px] h-[3px] bg-[#b5b5b5]" />
      <span className="absolute left-[67px] top-[39px] w-[697px] h-[3px] bg-[#5ec26a]" />
      <span className="absolute left-[764px] top-[39px] w-[20px] h-[3px] bg-[#4ea6ea]" />
    </div>
    <NetworkTable />
    <div className="h-[41px] shrink-0 box-content bg-[#eeeeee] border-y-2 border-[#ccc] flex items-center pl-[9px] text-[#333]">
      17 / 20 requests | 4.4 KB / 4.9 KB transferred
    </div>
    <div className="h-[42px] shrink-0 box-content bg-[#f3f3f3] border-b-2 border-[#ccc] flex items-center relative">
      <span className="ml-[23px] w-[5px] h-[20px] flex flex-col justify-between">
        <Dots />
      </span>
      <span className="ml-[31px]">Console</span>
      <span className="ml-[32px]">Sensors</span>
      <span className="ml-[47px] text-[#333]">What's New</span>
      <X size={15} strokeWidth={2.5} className="ml-[10px] text-[#666]" />
      <span className="absolute left-[264px] -bottom-[2px] w-[150px] h-[3px] bg-[#4ea6ea]" />
    </div>
    <div className="h-[41px] shrink-0 box-content bg-[#f3f3f3] border-b-2 border-[#ccc] flex items-center pl-[24px] text-[#333]">
      Highlights from the Chrome 70 update
    </div>
    <div className="flex-1 bg-white flex overflow-hidden">
      <div className="w-[705px] pl-[28px] whitespace-normal">
        <Article title="Live Expressions in the Console" className="pt-[30px] w-[640px]">
          Pin expressions to the top of the Console to monitor their values<br />in real-time.
        </Article>
        <Article title="Highlight DOM nodes during Eager Evaluation" className="pt-[24px] w-[640px]">
          Type an expression that evaluates to a node to highlight that<br />node in the viewport.
        </Article>
        <Article title="Autocomplete Conditional Breakpoints" className="pt-[19px] w-[640px]">
          Type expressions quickly and accurately.
        </Article>
        <Article title="Performance panel optimizations" className="pt-[23px] w-[640px]" />
      </div>
      <div className="mt-[32px]">
        <WhatsNewArt />
      </div>
    </div>
  </div>
);

export default function App() {
  return (
    <div className="w-[2410px] h-[1204px] overflow-hidden bg-white flex flex-col">
      <div className="h-[3px] shrink-0 bg-[#c9c9c9]" />
      <div className="flex flex-1 min-h-0">
        <div className="h-[1201px] overflow-hidden">
          <Page />
        </div>
        <div className="w-[31px] shrink-0 pt-[77px] pl-[6px] bg-white">
          <div className="w-[18px] h-[401px] rounded-[9px] bg-[#c2c2c2]" />
        </div>
        <DevTools />
      </div>
    </div>
  );
}
